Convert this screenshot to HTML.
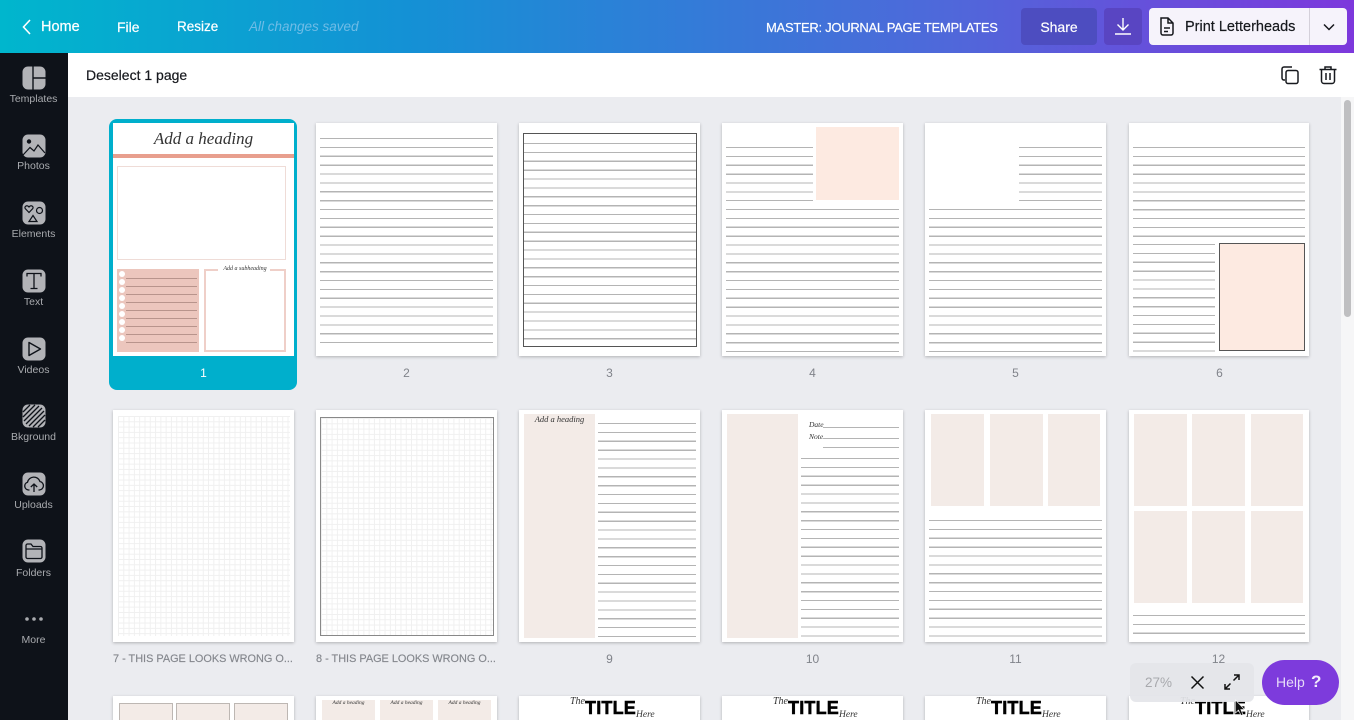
<!DOCTYPE html>
<html lang="en">
<head>
<meta charset="utf-8">
<title>Master: Journal Page Templates</title>
<style>
html,body{margin:0;padding:0;width:1354px;height:720px;overflow:hidden;background:#ebecf0}
body{position:relative;font-family:"Liberation Sans","DejaVu Sans",sans-serif}
div,span.a,svg.a{position:absolute}
.t{position:absolute;white-space:nowrap;line-height:1}
.top{left:0;top:0;width:1354px;height:53px;background:linear-gradient(90deg,#00b6cd 0%,#1491d5 30%,#4f68da 70%,#7d38dc 100%)}
.tw{color:#fff;font-size:14px;top:20px;-webkit-text-stroke:.2px #fff}
.bar{left:68px;top:53px;width:1286px;height:44px;background:#fff}
.side{left:0;top:53px;width:68px;height:667px;background:#0e1219}
.lab{left:0;width:67px;text-align:center;color:#a9abaf;font-size:10.5px}
.p{background:#fff;box-shadow:0 1px 3px rgba(0,0,0,.25);width:181px;height:233px;overflow:hidden;filter:blur(.35px)}
.p div{position:absolute}
.l{background:repeating-linear-gradient(#b4b4b4 0,#b4b4b4 1.2px,transparent 1.2px,transparent 8.87px)}
.pk{background:#f3ebe7}
.n{color:#80838a;font-size:12px;text-align:center;width:181px}
.s{font-family:"Liberation Serif",serif;font-style:italic;color:#333;white-space:nowrap;line-height:1;position:absolute}
.ttl{font-weight:bold;font-size:18px;color:#000;position:absolute;line-height:1;white-space:nowrap;letter-spacing:.2px;-webkit-text-stroke:.5px #000}
.gr{background-image:linear-gradient(#f0f0f0 1px,transparent 1px),linear-gradient(90deg,#f0f0f0 1px,transparent 1px);background-size:5.3px 5.3px}
.lg{text-align:left;color:#84878d;font-size:10.9px;white-space:nowrap;-webkit-text-stroke:.15px #84878d}
</style>
</head>
<body>

<!-- grid area -->
<div style="left:68px;top:97px;width:1273px;height:623px;background:#ebecf0"></div>

<!-- row 1 -->
<div style="left:109px;top:119px;width:188px;height:271px;background:#00afcc;border-radius:8px"></div>
<div class="p" style="left:113px;top:123px;box-shadow:none">
  <div class="s" style="left:0;top:7px;width:181px;text-align:center;font-size:17px">Add a heading</div>
  <div style="left:0;top:31px;width:181px;height:4px;background:#e89f8e"></div>
  <div style="left:4px;top:43px;width:167px;height:92px;border:1px solid #efdcd7"></div>
  <div style="left:4px;top:146px;width:82px;height:83px;background:#ecc6bd"></div>
  <div style="left:13px;top:155px;width:71px;height:66px;background:repeating-linear-gradient(#b8948c 0,#b8948c 1px,transparent 1px,transparent 8px)"></div>
  <div style="left:6px;top:148px;width:6px;height:6px;border-radius:50%;background:#fff"></div>
  <div style="left:6px;top:156px;width:6px;height:6px;border-radius:50%;background:#fff"></div>
  <div style="left:6px;top:164px;width:6px;height:6px;border-radius:50%;background:#fff"></div>
  <div style="left:6px;top:172px;width:6px;height:6px;border-radius:50%;background:#fff"></div>
  <div style="left:6px;top:180px;width:6px;height:6px;border-radius:50%;background:#fff"></div>
  <div style="left:6px;top:188px;width:6px;height:6px;border-radius:50%;background:#fff"></div>
  <div style="left:6px;top:196px;width:6px;height:6px;border-radius:50%;background:#fff"></div>
  <div style="left:6px;top:204px;width:6px;height:6px;border-radius:50%;background:#fff"></div>
  <div style="left:6px;top:212px;width:6px;height:6px;border-radius:50%;background:#fff"></div>
  <div style="left:91px;top:146px;width:78px;height:79px;border:2px solid #efcfc8"></div>
  <div style="left:105px;top:142px;width:52px;height:8px;background:#fff"></div>
  <div class="s" style="left:91px;top:143px;width:82px;text-align:center;font-size:6px">Add a subheading</div>
</div>
<div class="t" style="left:113px;top:367px;width:181px;text-align:center;color:#fff;font-size:12px">1</div>

<div class="p" style="left:316px;top:123px"><div class="l" style="left:4px;top:15px;width:173px;height:206px"></div></div>
<div class="t n" style="left:316px;top:367px">2</div>

<div class="p" style="left:519px;top:123px">
  <div class="l" style="left:4px;top:20px;width:173px;height:204px"></div>
  <div style="left:4px;top:10px;width:172px;height:212px;border:1px solid #555"></div>
</div>
<div class="t n" style="left:519px;top:367px">3</div>

<div class="p" style="left:722px;top:123px">
  <div class="l" style="left:4px;top:24px;width:87px;height:54px"></div>
  <div style="left:94px;top:4px;width:83px;height:73px;background:#fdeae1"></div>
  <div class="l" style="left:4px;top:86px;width:173px;height:144px"></div>
</div>
<div class="t n" style="left:722px;top:367px">4</div>

<div class="p" style="left:925px;top:123px">
  <div class="l" style="left:94px;top:24px;width:83px;height:54px"></div>
  <div class="l" style="left:4px;top:86px;width:173px;height:144px"></div>
</div>
<div class="t n" style="left:925px;top:367px">5</div>

<div class="p" style="left:1129px;top:123px;width:180px">
  <div class="l" style="left:4px;top:24px;width:172px;height:90px"></div>
  <div class="l" style="left:4px;top:121px;width:82px;height:108px"></div>
  <div style="left:90px;top:120px;width:84px;height:106px;background:#fdeae1;border:1px solid #555"></div>
</div>
<div class="t n" style="left:1129px;top:367px">6</div>

<!-- row 2 -->
<div class="p" style="left:113px;top:410px;height:232px">
  <div class="gr" style="left:5px;top:6px;width:172px;height:220px"></div>
</div>
<div class="t n lg" style="left:113px;top:654px">7 - THIS PAGE LOOKS WRONG O...</div>

<div class="p" style="left:316px;top:410px;height:232px">
  <div class="gr" style="left:4px;top:7px;width:172px;height:217px;border:1px solid #888"></div>
</div>
<div class="t n lg" style="left:316px;top:654px">8 - THIS PAGE LOOKS WRONG O...</div>

<div class="p" style="left:519px;top:410px;height:232px">
  <div class="pk" style="left:5px;top:4px;width:71px;height:224px"></div>
  <div class="s" style="left:5px;top:5px;width:71px;text-align:center;font-size:8.5px">Add a heading</div>
  <div class="l" style="left:79px;top:13px;width:98px;height:216px"></div>
</div>
<div class="t n" style="left:519px;top:653px">9</div>

<div class="p" style="left:722px;top:410px;height:232px">
  <div class="pk" style="left:5px;top:4px;width:71px;height:224px"></div>
  <div class="s" style="left:87px;top:11px;font-size:7.5px">Date</div>
  <div class="s" style="left:87px;top:23px;font-size:7.5px">Note</div>
  <div style="left:101px;top:17px;width:76px;height:1px;background:#b4b4b4"></div>
  <div style="left:101px;top:28px;width:76px;height:1px;background:#b4b4b4"></div>
  <div style="left:101px;top:37px;width:76px;height:1px;background:#b4b4b4"></div>
  <div class="l" style="left:79px;top:48px;width:98px;height:181px"></div>
</div>
<div class="t n" style="left:722px;top:653px">10</div>

<div class="p" style="left:925px;top:410px;height:232px">
  <div class="pk" style="left:6px;top:4px;width:53px;height:92px"></div>
  <div class="pk" style="left:65px;top:4px;width:53px;height:92px"></div>
  <div class="pk" style="left:123px;top:4px;width:52px;height:92px"></div>
  <div class="l" style="left:4px;top:110px;width:173px;height:118px"></div>
</div>
<div class="t n" style="left:925px;top:653px">11</div>

<div class="p" style="left:1129px;top:410px;height:232px;width:180px">
  <div class="pk" style="left:5px;top:4px;width:53px;height:92px"></div>
  <div class="pk" style="left:63px;top:4px;width:53px;height:92px"></div>
  <div class="pk" style="left:122px;top:4px;width:52px;height:92px"></div>
  <div class="pk" style="left:5px;top:101px;width:53px;height:92px"></div>
  <div class="pk" style="left:63px;top:101px;width:53px;height:92px"></div>
  <div class="pk" style="left:122px;top:101px;width:52px;height:92px"></div>
  <div class="l" style="left:4px;top:205px;width:172px;height:20px"></div>
</div>
<div class="t n" style="left:1128px;top:653px">12</div>

<!-- row 3 -->
<div class="p" style="left:113px;top:696px;height:60px">
  <div class="pk" style="left:6px;top:7px;width:52px;height:60px;border:1px solid #bdb7b3"></div>
  <div class="pk" style="left:63px;top:7px;width:52px;height:60px;border:1px solid #bdb7b3"></div>
  <div class="pk" style="left:121px;top:7px;width:52px;height:60px;border:1px solid #bdb7b3"></div>
</div>
<div class="p" style="left:316px;top:696px;height:60px">
  <div class="pk" style="left:6px;top:4px;width:53px;height:60px"></div>
  <div class="pk" style="left:64px;top:4px;width:53px;height:60px"></div>
  <div class="pk" style="left:122px;top:4px;width:53px;height:60px"></div>
  <div class="s" style="left:6px;top:5px;width:53px;text-align:center;font-size:5.5px">Add a heading</div>
  <div class="s" style="left:64px;top:5px;width:53px;text-align:center;font-size:5.5px">Add a heading</div>
  <div class="s" style="left:122px;top:5px;width:53px;text-align:center;font-size:5.5px">Add a heading</div>
</div>
<div class="p" style="left:519px;top:696px;height:60px">
  <div class="s" style="left:51px;top:1px;font-size:10px">The</div>
  <div class="ttl" style="left:66px;top:3px">TITLE</div>
  <div class="s" style="left:117px;top:15px;font-size:9.5px">Here</div>
</div>
<div class="p" style="left:722px;top:696px;height:60px">
  <div class="s" style="left:51px;top:1px;font-size:10px">The</div>
  <div class="ttl" style="left:66px;top:3px">TITLE</div>
  <div class="s" style="left:117px;top:15px;font-size:9.5px">Here</div>
</div>
<div class="p" style="left:925px;top:696px;height:60px">
  <div class="s" style="left:51px;top:1px;font-size:10px">The</div>
  <div class="ttl" style="left:66px;top:3px">TITLE</div>
  <div class="s" style="left:117px;top:15px;font-size:9.5px">Here</div>
</div>
<div class="p" style="left:1129px;top:696px;height:60px;width:180px">
  <div class="s" style="left:51px;top:1px;font-size:10px">The</div>
  <div class="ttl" style="left:66px;top:3px">TITLE</div>
  <div class="s" style="left:117px;top:15px;font-size:9.5px">Here</div>
</div>

<!-- scrollbar -->
<div style="left:1341px;top:97px;width:13px;height:623px;background:#f6f6f7"></div>
<div style="left:1344px;top:100px;width:7px;height:217px;background:#bfbfc1;border-radius:4px"></div>

<!-- top bar -->
<div class="top"></div>
<svg class="a" style="left:20px;top:18px" width="14" height="18" viewBox="0 0 14 18"><path d="M10 2 3.500 9 10 16" fill="none" stroke="#fff" stroke-width="1.600"/></svg>
<div class="t tw" style="left:41px;font-size:14.5px">Home</div>
<div class="t tw" style="left:117px">File</div>
<div class="t tw" style="left:177px;font-size:13.500px">Resize</div>
<div class="t" style="left:249px;top:20px;font-size:13.500px;font-style:italic;color:#6fbce6">All changes saved</div>
<div class="t tw" style="left:766px;top:21px;font-size:13px;letter-spacing:-.28px">MASTER: JOURNAL PAGE TEMPLATES</div>
<div style="left:1021px;top:8px;width:76px;height:37px;background:#4d4dc0;border-radius:4px"></div>
<div class="t tw" style="left:1021px;width:76px;text-align:center">Share</div>
<div style="left:1104px;top:8px;width:38px;height:37px;background:#5945c2;border-radius:4px"></div>
<svg class="a" style="left:1113px;top:16px" width="20" height="20" viewBox="0 0 20 20"><path d="M10 2V14M4.500 8.500 10 14l5.500-5.500M2 18H18" fill="none" stroke="#fff" stroke-width="1.400"/></svg>
<div style="left:1149px;top:8px;width:198px;height:37px;background:#f6f3fb;border-radius:4px"></div>
<div style="left:1309px;top:8px;width:1px;height:37px;background:#d4d0da"></div>
<svg class="a" style="left:1158px;top:16px" width="18" height="21" viewBox="0 0 18 21"><path d="M3 2H10L15 7V17a2 2 0 0 1-2 2H5a2 2 0 0 1-2-2ZM10 2V7H15M6 12H12M6 15.500H10" fill="none" stroke="#16181d" stroke-width="1.500"/></svg>
<div class="t" style="left:1185px;top:20px;font-size:14.500px;color:#16181d;-webkit-text-stroke:.2px #16181d">Print Letterheads</div>
<svg class="a" style="left:1322px;top:22px" width="14" height="10" viewBox="0 0 14 10"><path d="M2 2.500 7 7.500 12 2.500" fill="none" stroke="#16181d" stroke-width="1.500"/></svg>

<!-- second bar -->
<div class="bar"></div>
<div class="t" style="left:86px;top:68px;font-size:14px;color:#17191e;-webkit-text-stroke:.2px #17191e">Deselect 1 page</div>
<svg class="a" style="left:1280px;top:65px" width="20" height="20" viewBox="0 0 20 20"><path d="M5 15H4a2 2 0 0 1-2-2V4a2 2 0 0 1 2-2H12" fill="none" stroke="#17191e" stroke-width="1.500"/><rect x="6" y="5.500" width="12" height="13" rx="2" fill="none" stroke="#17191e" stroke-width="1.500"/></svg>
<svg class="a" style="left:1318px;top:65px" width="20" height="20" viewBox="0 0 20 20"><path d="M1.500 4.500H18.500M7 4.500V2H13V4.500M3.500 4.500V16a2.500 2.500 0 0 0 2.500 2.500H14A2.500 2.500 0 0 0 16.500 16V4.500M8 8V15M12 8V15" fill="none" stroke="#17191e" stroke-width="1.500"/></svg>

<!-- sidebar -->
<div class="side"></div>
<svg class="a" style="left:22px;top:66px" width="24" height="24" viewBox="0 0 24 24"><rect x=".5" y=".5" width="23" height="23" rx="5.500" fill="#b2b3b7"/><path d="M11 0V24M11 12H24" stroke="#0e1219" stroke-width="1.400"/></svg>
<div class="t lab" style="top:94px">Templates</div>
<svg class="a" style="left:22px;top:134px" width="24" height="24" viewBox="0 0 24 24"><rect x=".5" y=".5" width="23" height="23" rx="5.500" fill="#b2b3b7"/><circle cx="7" cy="7.500" r="2.200" fill="#0e1219"/><path d="M1 21 8 13.500 12 17 16 11 23 19" fill="none" stroke="#0e1219" stroke-width="1.200"/></svg>
<div class="t lab" style="top:161px">Photos</div>
<svg class="a" style="left:22px;top:201px" width="24" height="24" viewBox="0 0 24 24"><rect x=".5" y=".5" width="23" height="23" rx="5.500" fill="#b2b3b7"/><path d="M7 11.500 3.200 7.500C2 5.500 5 3.500 7 6 9 3.500 12 5.500 10.800 7.500Z" fill="none" stroke="#0e1219" stroke-width="1.200"/><circle cx="17.500" cy="9.500" r="3" fill="none" stroke="#0e1219" stroke-width="1.200"/><path d="M11 14.500 15 20.500H7Z" fill="none" stroke="#0e1219" stroke-width="1.200"/></svg>
<div class="t lab" style="top:229px">Elements</div>
<svg class="a" style="left:22px;top:269px" width="24" height="24" viewBox="0 0 24 24"><rect x=".5" y=".5" width="23" height="23" rx="5.500" fill="#b2b3b7"/><path d="M5 7.500V4.500H19V7.500M12 4.500V19.500M8.500 19.500H15.500" fill="none" stroke="#0e1219" stroke-width="1.300"/></svg>
<div class="t lab" style="top:297px">Text</div>
<svg class="a" style="left:22px;top:337px" width="24" height="24" viewBox="0 0 24 24"><rect x=".5" y=".5" width="23" height="23" rx="5.500" fill="#b2b3b7"/><path d="M7 5.500V18.500L18.500 12Z" fill="none" stroke="#0e1219" stroke-width="1.400" stroke-linejoin="round"/></svg>
<div class="t lab" style="top:365px">Videos</div>
<svg class="a" style="left:22px;top:404px" width="24" height="24" viewBox="0 0 24 24"><rect x=".5" y=".5" width="23" height="23" rx="5.500" fill="#b2b3b7"/><path d="M1 8 8 1M1 13 13 1M2 17 17 2M4 20 20 4M7 22 22 7M11 23 23 11M16 23 23 16" stroke="#0e1219" stroke-width="1.300"/></svg>
<div class="t lab" style="top:432px">Bkground</div>
<svg class="a" style="left:22px;top:472px" width="24" height="24" viewBox="0 0 24 24"><rect x=".5" y=".5" width="23" height="23" rx="5.500" fill="#b2b3b7"/><path d="M7.500 18H6.500A4 4 0 0 1 5.500 10.200 6.500 6.500 0 0 1 18 9.500 4.300 4.300 0 0 1 17.500 18H16.500M12 20V12M8.800 15 12 12 15.200 15" fill="none" stroke="#0e1219" stroke-width="1.300"/></svg>
<div class="t lab" style="top:500px">Uploads</div>
<svg class="a" style="left:22px;top:539px" width="24" height="24" viewBox="0 0 24 24"><rect x=".5" y=".5" width="23" height="23" rx="5.500" fill="#b2b3b7"/><path d="M4 7V18a1.500 1.500 0 0 0 1.500 1.500H18.500A1.500 1.500 0 0 0 20 18V9a1.500 1.500 0 0 0-1.500-1.500H11L9 5H5.500A1.500 1.500 0 0 0 4 6.500ZM4 10H20" fill="none" stroke="#0e1219" stroke-width="1.300"/></svg>
<div class="t lab" style="top:568px">Folders</div>
<svg class="a" style="left:24px;top:616px" width="20" height="6" viewBox="0 0 20 6"><circle cx="3" cy="3" r="1.800" fill="#a9abaf"/><circle cx="10" cy="3" r="1.800" fill="#a9abaf"/><circle cx="17" cy="3" r="1.800" fill="#a9abaf"/></svg>
<div class="t lab" style="top:635px">More</div>

<!-- zoom control -->
<div style="left:1130px;top:663px;width:124px;height:39px;background:rgba(228,229,233,.93);border-radius:6px"></div>
<div class="t" style="left:1145px;top:676px;font-size:13.500px;color:#a8a9ad">27%</div>
<svg class="a" style="left:1190px;top:675px" width="15" height="15" viewBox="0 0 15 15"><path d="M1.500 1.500 13.500 13.500M13.500 1.500 1.500 13.500" stroke="#111" stroke-width="1.500"/></svg>
<svg class="a" style="left:1223px;top:673px" width="18" height="18" viewBox="0 0 18 18"><path d="M16 2 10.500 7.500M11 2H16V7M2 16 7.500 10.500M2 11V16H7" fill="none" stroke="#111" stroke-width="1.500"/></svg>
<svg class="a" style="left:1234px;top:699px" width="12" height="18" viewBox="0 0 12 18"><path d="M1.500 1V14L4.500 11 7 16.500 9 15.500 6.800 10.500H10.500Z" fill="#111" stroke="#fff" stroke-width=".6"/></svg>

<!-- help -->
<div style="left:1262px;top:660px;width:77px;height:45px;background:#7d3bdc;border-radius:23px"></div>
<div class="t" style="left:1276px;top:675px;font-size:14px;color:#e6dbf8">Help</div>
<div class="t" style="left:1311px;top:673px;font-size:17px;font-weight:bold;color:#f3edfb">?</div>

</body>
</html>
